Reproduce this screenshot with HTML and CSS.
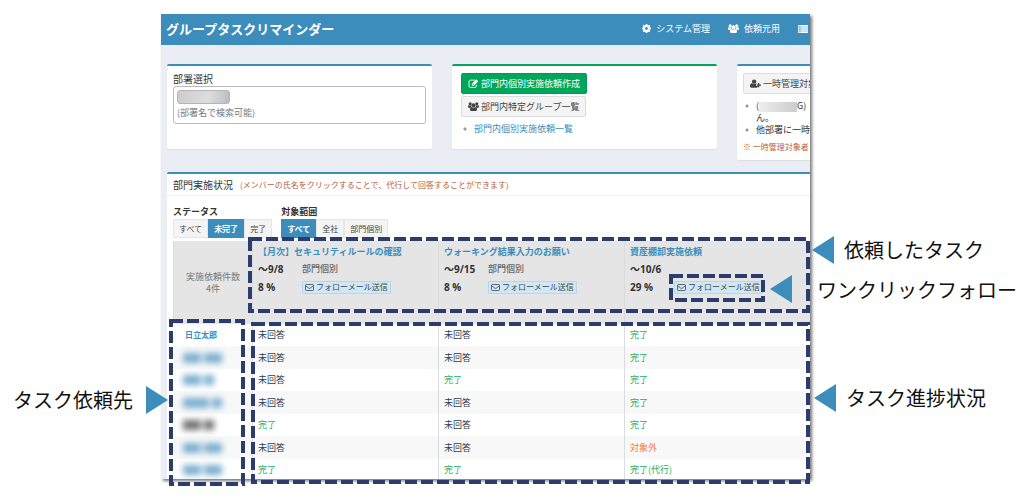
FILE: index.html
```html
<!DOCTYPE html>
<html lang="ja">
<head>
<meta charset="utf-8">
<title>グループタスクリマインダー</title>
<link rel="stylesheet" href="styles.css">
</head>
<body>
<svg class="sprite" aria-hidden="true">
  <symbol id="gear" viewBox="0 0 16 16"><path fill="currentColor" fill-rule="evenodd" d="M6.600 0h2.800l.4 2.200 1.300.6L12.900 1.500l1.800 1.900-1.200 1.800.5 1.200 2 .4v2.600l-2 .4-.5 1.300 1.200 1.800-1.900 1.900-1.700-1.200-1.300.5L9.400 16H6.600l-.4-1.900-1.300-.5-1.700 1.200-1.900-1.900 1.200-1.800L2 9.800l-2-.4V6.800l2-.4.5-1.200-1.200-1.800L3.100 1.500l1.800 1.300 1.300-.6zM8 5.500a2.500 2.500 0 1 0 0 5 2.500 2.500 0 0 0 0-5z"/></symbol>
  <symbol id="users" viewBox="0 0 20 16"><g fill="currentColor"><circle cx="4" cy="3.200" r="2.800"/><circle cx="16" cy="3.200" r="2.800"/><circle cx="10" cy="5.800" r="3.600"/><path d="M0 10V7.500Q0 5.500 2 5.800q2 1 3.500.2Q5.500 8 7 9.200H4.500L3.500 10.500zM20 10V7.500q0-2-2-1.700-2 1-3.500.2Q14.500 8 13 9.200h2.500l1 1.300zM3.500 13.500Q3.500 9.500 6 9q4 2 8 0 2.500.5 2.500 4.500 0 2.500-2 2.500h-9q-2 0-2-2.500z"/></g></symbol>
  <symbol id="list" viewBox="0 0 18 14"><path fill="currentColor" d="M0 0h3v2.800H0zM4 0H18v2.800H4zM0 3.700h3v2.800H0zM4 3.700H18v2.800H4zM0 7.500h3v2.800H0zM4 7.500H18v2.800H4zM0 11.200h3V14H0zM4 11.200H18V14H4z"/></symbol>
  <symbol id="edit" viewBox="0 0 18 16"><path fill="none" stroke="currentColor" stroke-width="1.600" d="M11.500 2H3.500Q1 2 1 4.500v8Q1 15 3.500 15h8q2.500 0 2.500-2.500V10"/><path fill="currentColor" fill-rule="evenodd" d="M6 8.500 14 .5l3.500 3.500-8 8H6zM7.500 9v1.500H9l.5-.5L8 8.500z"/></symbol>
  <symbol id="user-plus" viewBox="0 0 20 16"><g fill="currentColor"><circle cx="7.500" cy="4.500" r="4"/><path d="M0 13q0-5.500 3.500-5.500 4 2.500 8 0 1 0 1.800 1H11v4h3v2q-.7 1-2 1H2.500Q0 15.500 0 13z"/><path d="M14.500 7h2.400v2.600H20V12h-3.100v3h-2.400v-3H12V9.600h2.500z"/></g></symbol>
  <symbol id="mail" viewBox="0 0 18 14"><path fill="none" stroke="currentColor" stroke-width="1.600" d="M1 2.500Q1 1 2.500 1h13Q17 1 17 2.500v9q0 1.500-1.500 1.500h-13Q1 13 1 11.500zM1.500 3.500l6 4.800q1.500 1 3 0l6-4.800"/></symbol>
</svg>
<main class="figure">
  <div class="app">
    <header class="topbar">
      <h1 class="brand">グループタスクリマインダー</h1>
      <nav class="menu">
        <a href="#"><svg class="icon"><use href="#gear"/></svg>システム管理</a>
        <a href="#"><svg class="icon icon-wide"><use href="#users"/></svg>依頼元用</a>
        <a href="#" aria-label="メニュー"><svg class="icon icon-list"><use href="#list"/></svg></a>
      </nav>
    </header>

    <section class="cards">
      <div class="card">
        <label class="card-label" for="dept">部署選択</label>
        <div class="picker">
          <span class="tag"></span>
          <input id="dept" type="text" placeholder="(部署名で検索可能)">
        </div>
      </div>
      <div class="card card-green">
        <div class="actions">
          <button class="btn btn-green" type="button"><svg class="icon icon-wide"><use href="#edit"/></svg>部門内個別実施依頼作成</button>
          <button class="btn" type="button"><svg class="icon icon-wide"><use href="#users"/></svg>部門内特定グループ一覧</button>
        </div>
        <ul class="bullets"><li><a href="#">部門内個別実施依頼一覧</a></li></ul>
      </div>
      <div class="card card-side">
        <button class="btn" type="button"><svg class="icon icon-wide"><use href="#user-plus"/></svg>一時管理対象</button>
        <ul class="bullets">
          <li>(<span class="mask"></span>G)<br>ん。</li>
          <li>他部署に一時</li>
        </ul>
        <p class="warn">※ 一時管理対象者と</p>
      </div>
    </section>

    <section class="panel">
      <div class="panel-head">
        <h2>部門実施状況</h2>
        <span class="warn">(メンバーの氏名をクリックすることで、代行して回答することができます)</span>
      </div>
      <div class="filters">
        <div>
          <h3>ステータス</h3>
          <div class="toggle"><button type="button">すべて</button><button class="on" type="button">未完了</button><button type="button">完了</button></div>
        </div>
        <div>
          <h3>対象範囲</h3>
          <div class="toggle"><button class="on" type="button">すべて</button><button type="button">全社</button><button type="button">部門個別</button></div>
        </div>
      </div>
      <table class="tasks">
        <colgroup><col class="col-name"><col class="col-task"><col class="col-task"><col></colgroup>
        <thead>
          <tr>
            <th class="count" scope="col">実施依頼件数<br>4件</th>
            <th scope="col"><a href="#">【月次】セキュリティルールの確認</a>
              <div class="meta"><b>〜9/8</b><span>部門個別</span><b>8 %</b><button class="follow" type="button"><svg class="icon"><use href="#mail"/></svg>フォローメール送信</button></div></th>
            <th scope="col"><a href="#">ウォーキング結果入力のお願い</a>
              <div class="meta"><b>〜9/15</b><span>部門個別</span><b>8 %</b><button class="follow" type="button"><svg class="icon"><use href="#mail"/></svg>フォローメール送信</button></div></th>
            <th scope="col"><a href="#">資産棚卸実施依頼</a>
              <div class="meta"><b>〜10/6</b><span></span><b>29 %</b><button class="follow" type="button"><svg class="icon"><use href="#mail"/></svg>フォローメール送信</button></div></th>
          </tr>
        </thead>
        <tbody>
          <tr><td class="member"><a href="#">日立太郎</a></td><td>未回答</td><td>未回答</td><td class="done">完了</td></tr>
          <tr><td class="member"><span class="veil"><i class="w18"></i><i class="w18"></i></span></td><td>未回答</td><td>未回答</td><td class="done">完了</td></tr>
          <tr><td class="member"><span class="veil"><i class="w18"></i><i class="w9"></i></span></td><td>未回答</td><td class="done">完了</td><td class="done">完了</td></tr>
          <tr><td class="member"><span class="veil"><i class="w27"></i><i class="w9"></i></span></td><td>未回答</td><td>未回答</td><td class="done">完了</td></tr>
          <tr><td class="member"><span class="veil veil-dark"><i class="w18"></i><i class="w9"></i></span></td><td class="done">完了</td><td>未回答</td><td class="done">完了</td></tr>
          <tr><td class="member"><span class="veil"><i class="w18"></i><i class="w18"></i></span></td><td>未回答</td><td>未回答</td><td class="exempt">対象外</td></tr>
          <tr><td class="member"><span class="veil"><i class="w18"></i><i class="w18"></i></span></td><td class="done">完了</td><td class="done">完了</td><td class="done">完了(代行)</td></tr>
        </tbody>
      </table>
    </section>
  </div>

  <div class="outline outline-tasks"><svg><rect x="2" y="2"/></svg></div>
  <div class="outline outline-follow"><svg><rect x="2" y="2"/></svg></div>
  <div class="outline outline-members"><svg><rect x="2" y="2"/></svg></div>
  <div class="outline outline-progress"><svg><rect x="2" y="2"/></svg></div>

  <span class="arrow arrow-follow"></span>
  <p class="callout callout-tasks"><span class="arrow"></span>依頼したタスク</p>
  <p class="callout callout-follow">ワンクリックフォロー</p>
  <p class="callout callout-progress"><span class="arrow"></span>タスク進捗状況</p>
  <p class="callout callout-members">タスク依頼先<span class="arrow arrow-right"></span></p>
</main>
</body>
</html>
```
FILE: styles.css
```css
* { box-sizing: border-box; }
body {
  margin: 0;
  background: #fff;
  color: #333;
  font: 9px/12px "Noto Sans CJK JP", sans-serif;
}
h1, h2, h3, p, ul { margin: 0; padding: 0; }
a { color: #3c8dbc; text-decoration: none; }
button, input { font: inherit; color: inherit; margin: 0; }
.sprite { position: absolute; width: 0; height: 0; }
.icon { width: 9px; height: 9px; flex: none; }
.icon-wide { width: 11px; }
.icon-list { width: 10px; height: 8px; }

.figure { position: relative; padding: 14px 214px 14px 161px; }
.app {
  height: 465px;
  overflow: hidden;
  background: #eaedf3;
  box-shadow: 2px 2px 3px #777;
}

.topbar {
  display: flex;
  align-items: center;
  justify-content: space-between;
  height: 31px;
  padding: 0 2px 2px 5px;
  background: #3c8dbc;
  color: #fff;
}
.brand { font-size: 13px; line-height: 20px; font-weight: 700; }
.menu { display: flex; gap: 18px; }
.menu a { display: flex; align-items: center; gap: 5px; color: #fff; }

.cards {
  display: flex;
  align-items: flex-start;
  gap: 20px;
  height: 127px;
  padding: 19px 0 0 6px;
}
.card {
  flex: 0 0 265px;
  min-height: 85px;
  padding: 6px 6px 7px;
  background: #fff;
  border-top: 2px solid #3c8dbc;
  border-radius: 2px;
  box-shadow: 0 1px 1px #dde0e5;
}
.card-green { padding: 7px 9px; border-top-color: #00a65a; }
.card-side { padding: 7px 6px; white-space: nowrap; }
.card-label { display: block; font-size: 10px; line-height: 14px; }
.picker {
  display: flex;
  flex-direction: column;
  align-items: flex-start;
  height: 38px;
  padding: 3px;
  border: 1px solid #bbb;
  border-radius: 3px;
}
.tag {
  width: 53px;
  height: 14px;
  border: 1px solid #b5b5b5;
  border-radius: 3px;
  background: linear-gradient(100deg, #ccc, #ddd 60%, #b8bcc4);
}
.picker input { width: 100%; height: 16px; padding: 0; border: 0; outline: 0; background: none; }
.picker input::placeholder { color: #777; opacity: 1; }
.actions { display: flex; flex-direction: column; align-items: flex-start; gap: 2px; }
.btn {
  display: flex;
  align-items: center;
  gap: 2px;
  height: 21px;
  padding: 0 6px;
  border: 1px solid #ddd;
  border-radius: 2px;
  background: #f4f4f4;
  color: #444;
}
.btn-green { background: #00a65a; border-color: #009a50; color: #fff; }
.bullets { list-style: none; padding-top: 6px; }
.bullets li { display: flow-root; padding-left: 13px; background: radial-gradient(circle at 4px 6px, #999 1px, transparent 2px); }
.mask {
  display: inline-block;
  width: 38px;
  height: 10px;
  vertical-align: middle;
  background: linear-gradient(90deg, #eee, #ccc);
}
.warn { color: #b9603a; font-size: 8px; font-weight: 400; }
.card-side .warn { padding-top: 5px; }

.panel {
  margin-left: 6px;
  padding-left: 6px;
  background: #fff;
  border-top: 2px solid #3c8dbc;
  border-radius: 2px 0 0 0;
}
.panel-head {
  display: flex;
  align-items: center;
  gap: 7px;
  height: 22px;
  margin-left: -6px;
  padding-left: 6px;
  border-bottom: 1px solid #f0f0f0;
}
.panel-head h2 { font-size: 10px; line-height: 14px; font-weight: 400; }
.filters { display: flex; gap: 9px; padding: 9px 0 3px; }
.filters h3 { font-size: 9px; line-height: 14px; font-weight: 700; }
.toggle { display: flex; font-size: 8px; }
.toggle button {
  height: 19px;
  padding: 0 6px;
  border: 0;
  background: #f4f4f4;
  box-shadow: inset 0 0 0 1px #e6e6e6;
  color: #444;
}
.toggle .on { background: #3c8dbc; box-shadow: none; color: #fff; font-weight: 700; }

.tasks { width: 100%; table-layout: fixed; border-collapse: separate; border-spacing: 0; }
.col-name { width: 79px; }
.col-task { width: 186px; }
.tasks th {
  height: 83px;
  padding: 5px 5px 4px;
  background: #e5e5e5;
  border-left: 1px solid #d9dcdf;
  text-align: left;
  vertical-align: top;
  white-space: nowrap;
}
.tasks .count { vertical-align: middle; text-align: center; font-weight: 400; color: #777; padding: 4px 0; }
.meta {
  display: grid;
  grid-template-columns: 44px 1fr;
  grid-auto-rows: 18px;
  align-items: center;
  justify-items: start;
  padding-top: 2px;
}
.meta b { font: 700 10px/14px "Open Sans", "Noto Sans CJK JP", sans-serif; }
.meta span { color: #666; font-weight: 500; }
.follow {
  display: flex;
  align-items: center;
  gap: 2px;
  height: 13px;
  padding: 0 2px;
  border: 1px solid #b4d8ea;
  border-radius: 1px;
  background: #cfe8f7;
  color: #444;
  font-size: 8px;
  font-weight: 400;
}
.tasks td { height: 22px; padding: 0 5px; border-left: 1px solid #d9dde2; color: #2a4054; }
.tasks tr:nth-child(even) td { height: 23px; background: #f8f8f8; }
.tasks .member { padding-left: 12px; border-left: 0; font-size: 8px; font-weight: 700; }
.tasks .done { color: #27ae60; }
.tasks .exempt { color: #f5793a; }
.veil { display: flex; gap: 3px; margin-left: -2px; filter: blur(3px); color: #79aed0; }
.veil i { height: 10px; background: currentColor; }
.veil-dark { color: #707070; }
.w9 { width: 10px; }
.w18 { width: 18px; }
.w27 { width: 26px; }

.outline { position: absolute; }
.outline svg { display: block; width: 100%; height: 100%; }
.outline rect {
  width: calc(100% - 4px);
  height: calc(100% - 4px);
  fill: none;
  stroke: #2c3c6c;
  stroke-width: 4px;
  stroke-dasharray: 12 4;
}
.outline-tasks { left: 248px; right: 214px; top: 237px; height: 76px; }
.outline-follow { left: 669px; width: 96px; top: 274px; height: 28px; }
.outline-members { left: 169px; width: 76px; top: 319px; height: 167px; }
.outline-progress { left: 251px; right: 214px; top: 322px; height: 162px; }

.arrow { flex: none; width: 22px; height: 28px; background: #3c8dbc; clip-path: polygon(0 50%, 100% 0, 100% 100%); }
.arrow-right { clip-path: polygon(100% 50%, 0 0, 0 100%); }
.arrow-follow { position: absolute; left: 770px; top: 275px; }
.callout {
  position: absolute;
  display: flex;
  align-items: center;
  gap: 10px;
  height: 28px;
  color: #111;
  font-size: 20px;
  line-height: 28px;
  white-space: nowrap;
}
.callout-tasks { right: 40px; top: 236px; }
.callout-follow { right: 7px; top: 276px; }
.callout-progress { right: 38px; top: 384px; }
.callout-members { left: 13px; top: 386px; gap: 13px; }
```
